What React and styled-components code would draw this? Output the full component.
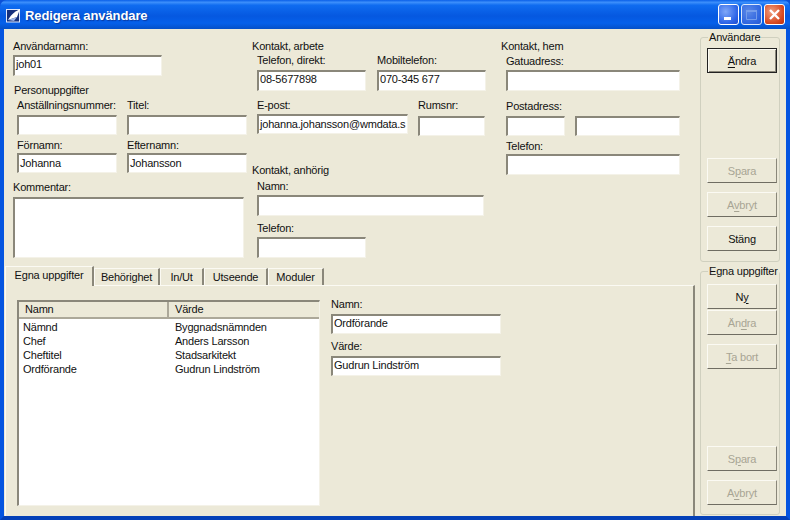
import React from "react";
import styled, { createGlobalStyle } from "styled-components";

const Global = createGlobalStyle`
  html, body {
    margin: 0;
    padding: 0;
    width: 790px;
    height: 520px;
    overflow: hidden;
    background: #0a50d8;
  }
  * {
    box-sizing: border-box;
  }
`;

const Window = styled.div`
  width: 790px;
  height: 520px;
  display: flex;
  flex-direction: column;
  font-family: "Liberation Sans", Arial, sans-serif;
  font-size: 11px;
  letter-spacing: -0.2px;
  color: #111;
`;

const TitleBar = styled.div`
  height: 29px;
  flex: none;
  display: flex;
  align-items: center;
  padding: 1px 5px 0 6px;
  border-radius: 7px 7px 0 0;
  background: linear-gradient(
    180deg,
    #0a5fe8 0%,
    #3c8ffb 8%,
    #0f6cf0 18%,
    #0558e0 55%,
    #0560ea 80%,
    #0450c8 100%
  );
`;

const TitleText = styled.div`
  margin-left: 4px;
  flex: 1;
  color: #fff;
  font-size: 13px;
  font-weight: 700;
  letter-spacing: -0.1px;
  text-shadow: 1px 1px 1px #0a3aa0;
`;

const Controls = styled.div`
  display: flex;
  gap: 2px;
  margin-top: -2px;
`;

const CtrlButton = styled.div`
  width: 21px;
  height: 21px;
  border: 1px solid #fff;
  border-radius: 3px;
  display: flex;
  align-items: center;
  justify-content: center;
  background: ${(p) =>
    p.$kind === "close"
      ? "radial-gradient(circle at 35% 35%, #f0a080, #d84a22 65%, #b8300e)"
      : p.$kind === "off"
      ? "radial-gradient(circle at 35% 35%, #6a90e8, #3a6ae0 65%, #2a58d0)"
      : "radial-gradient(circle at 35% 35%, #80a8f8, #2e66e8 65%, #1c4cd0)"};
  opacity: ${(p) => (p.$kind === "off" ? 0.85 : 1)};
`;

const Frame = styled.div`
  flex: 1;
  display: flex;
  min-height: 0;
  background: #ece9d8;
  border-left: 4px solid #0555e0;
  border-right: 4px solid #0555e0;
  border-bottom: 4px solid #0440b8;
`;

const Main = styled.div`
  width: 691px;
  display: flex;
  flex-direction: column;
`;

const TopForm = styled.div`
  height: 232px;
  display: grid;
  grid-template-columns: 239px 249px 1fr;
  padding: 11px 0 0 9px;
`;

const Column = styled.div`
  display: flex;
  flex-direction: column;
`;

const Heading = styled.div`
  height: 13px;
  line-height: 13px;
  white-space: nowrap;
  margin-top: ${(p) => p.$top || 0}px;
  margin-left: ${(p) => p.$left || 0}px;
`;

const Group = styled.div`
  display: flex;
  flex-direction: column;
  margin-left: ${(p) => p.$left ?? 5}px;
`;

const Row = styled.div`
  display: flex;
  gap: ${(p) => p.$gap || 10}px;
  align-items: flex-start;
  margin-top: ${(p) => p.$top || 0}px;
`;

const Field = styled.div`
  display: flex;
  flex-direction: column;
  width: ${(p) => p.$w}px;
  margin-top: ${(p) => p.$top || 0}px;
`;

const Label = styled.label`
  height: 13px;
  line-height: 13px;
  white-space: nowrap;
  margin-bottom: ${(p) => p.$gap}px;
`;

const Input = styled.div`
  height: ${(p) => p.$h || 21}px;
  background: #fff;
  border-top: 2px solid #8a877a;
  border-left: 2px solid #8a877a;
  border-right: 1px solid #f4f2e8;
  border-bottom: 1px solid #f4f2e8;
  padding: ${(p) => (p.$tight ? 1 : 2)}px 0 0 1px;
  line-height: 13px;
  white-space: nowrap;
  overflow: hidden;
`;

const TabArea = styled.div`
  flex: 1;
  display: flex;
  flex-direction: column;
  padding: 4px 0 0 1px;
`;

const TabStrip = styled.div`
  height: 20px;
  display: flex;
  align-items: flex-end;
`;

const Tab = styled.div`
  width: ${(p) => p.$w}px;
  height: ${(p) => (p.$active ? 20 : 17)}px;
  line-height: ${(p) => (p.$active ? 17 : 16)}px;
  text-align: center;
  white-space: nowrap;
  border-right: 2px solid #8a877a;
  border-left: 1px solid #fbfaf3;
  border-top: 1px solid #fbfaf3;
  margin-bottom: ${(p) => (p.$active ? -1 : 0)}px;
  position: relative;
  z-index: ${(p) => (p.$active ? 1 : 0)};
  background: #ece9d8;
`;

const Panel = styled.div`
  flex: 1;
  display: flex;
  gap: 11px;
  padding: 12px 0 10px 11px;
  border-top: 1px solid #fbfaf3;
  border-left: 1px solid #fbfaf3;
  border-right: 2px solid #8a877a;
`;

const List = styled.div`
  width: 303px;
  margin-top: 2px;
  display: flex;
  flex-direction: column;
  background: #fff;
  border-top: 2px solid #8a877a;
  border-left: 2px solid #8a877a;
  border-right: 1px solid #f4f2e8;
  border-bottom: 1px solid #f4f2e8;
`;

const ListHead = styled.div`
  height: 17px;
  flex: none;
  display: flex;
  background: #ece9d8;
  border-bottom: 2px solid #aca899;
  line-height: 15px;
`;

const HeadCell = styled.div`
  width: ${(p) => p.$w}px;
  padding-left: 6px;
  border-right: ${(p) => (p.$sep ? "2px solid #aca899" : "none")};
`;

const ListBody = styled.div`
  padding-top: 1px;
`;

const ListRow = styled.div`
  height: 14px;
  line-height: 14px;
  display: flex;
`;

const Cell = styled.div`
  width: ${(p) => p.$w}px;
  padding-left: ${(p) => p.$pad}px;
`;

const PanelForm = styled.div`
  display: flex;
  flex-direction: column;
`;

const Side = styled.div`
  flex: 1;
  display: flex;
  flex-direction: column;
  padding: 2px 0 0 5px;
`;

const Box = styled.fieldset`
  margin: 0;
  padding: 4px 0 0 6px;
  min-width: 0;
  width: 80px;
  height: ${(p) => p.$h}px;
  margin-top: ${(p) => p.$top || 0}px;
  border: 1px solid #d0d0bf;
  border-radius: 3px;
  display: flex;
  flex-direction: column;
  legend {
    padding: 0 1px;
    margin-left: 1px;
    line-height: 13px;
    white-space: nowrap;
  }
`;

const Stack = styled.div`
  display: flex;
  flex-direction: column;
  width: 70px;
`;

const Button = styled.div`
  width: 70px;
  height: 25px;
  flex: none;
  margin-top: ${(p) => p.$top || 0}px;
  display: flex;
  align-items: center;
  justify-content: center;
  background: #ece9d8;
  color: ${(p) => (p.$off ? "#a8a594" : "#111")};
  border: 1px solid;
  border-color: ${(p) =>
    p.$main ? "#222" : "#fbfaf3 #8a877a #6f6d62 #fbfaf3"};
  box-shadow: ${(p) =>
    p.$main ? "inset 1px 1px #fbfaf3, inset -1px -1px #8a877a" : "none"};
  u {
    text-underline-offset: 2px;
  }
`;

const TextField = ({ w, label, value, top, gap, h, tight }) => (
  <Field $w={w} $top={top}>
    <Label $gap={gap}>{label}</Label>
    <Input $h={h} $tight={tight}>{value}</Input>
  </Field>
);

const rows = [
  ["Nämnd", "Byggnadsnämnden"],
  ["Chef", "Anders Larsson"],
  ["Cheftitel", "Stadsarkitekt"],
  ["Ordförande", "Gudrun Lindström"],
];

const tabs = [
  ["Egna uppgifter", 89],
  ["Behörighet", 66],
  ["In/Ut", 44],
  ["Utseende", 64],
  ["Moduler", 56],
];

export default function App() {
  return (
    <Window>
      <Global />
      <TitleBar>
        <svg width="15" height="15" viewBox="0 0 15 15">
          <rect x="0.5" y="1.5" width="13" height="12.5" fill="#16307c" stroke="#dfe8fb" />
          <path d="M2 12 C5 7 8 4 14 1 L11 9 Z" fill="#fff" />
          <path d="M2 12 L11 9 L8 13 Z" fill="#9db4e8" />
        </svg>
        <TitleText>Redigera användare</TitleText>
        <Controls>
          <CtrlButton>
            <svg width="13" height="13" viewBox="0 0 13 13">
              <rect x="2" y="9" width="7" height="3" fill="#fff" />
            </svg>
          </CtrlButton>
          <CtrlButton $kind="off">
            <svg width="13" height="13" viewBox="0 0 13 13">
              <path d="M1.5 3.5h10v8h-10z" fill="none" stroke="#88a8ec" />
              <path d="M1 2h11v2H1z" fill="#88a8ec" />
            </svg>
          </CtrlButton>
          <CtrlButton $kind="close">
            <svg width="13" height="13" viewBox="0 0 13 13">
              <path d="M2 2l9 9M11 2l-9 9" stroke="#fff" strokeWidth="2.4" />
            </svg>
          </CtrlButton>
        </Controls>
      </TitleBar>
      <Frame>
        <Main>
          <TopForm>
            <Column>
              <TextField w={149} label="Användarnamn:" value="joh01" gap={2} tight />
              <Heading $top={8} $left={1}>Personuppgifter</Heading>
              <Group $left={4}>
                <Row $top={2}>
                  <TextField w={100} label="Anställningsnummer:" gap={3} h={20} />
                  <TextField w={120} label="Titel:" gap={3} h={20} />
                </Row>
                <Row $top={4}>
                  <TextField w={100} label="Förnamn:" value="Johanna" gap={1} h={20} />
                  <TextField w={120} label="Efternamn:" value="Johansson" gap={1} h={20} />
                </Row>
              </Group>
              <TextField w={231} top={8} label="Kommentar:" gap={3} h={61} />
            </Column>
            <Column>
              <Heading>Kontakt, arbete</Heading>
              <Group>
                <Row $gap={11} $top={1}>
                  <TextField w={109} label="Telefon, direkt:" gap={3} value="08-5677898" tight />
                  <TextField w={109} label="Mobiltelefon:" gap={3} value="070-345 677" tight />
                </Row>
                <Row $top={8}>
                  <TextField w={151} label="E-post:" value="johanna.johansson@wmdata.s" gap={2} h={20} />
                  <TextField w={67} label="Rumsnr:" gap={4} h={20} />
                </Row>
              </Group>
              <Heading $top={28}>Kontakt, anhörig</Heading>
              <Group>
                <TextField w={227} top={3} label="Namn:" gap={2} />
                <TextField w={109} top={6} label="Telefon:" gap={2} />
              </Group>
            </Column>
            <Column>
              <Heading>Kontakt, hem</Heading>
              <Group>
                <TextField w={174} top={2} label="Gatuadress:" gap={2} />
                <Row $top={9}>
                  <TextField w={59} label="Postadress:" gap={3} h={20} />
                  <Field $w={105}>
                    <Label $gap={3} />
                    <Input $h={20} />
                  </Field>
                </Row>
                <TextField w={174} top={4} label="Telefon:" gap={1} />
              </Group>
            </Column>
          </TopForm>
          <TabArea>
            <TabStrip>
              {tabs.map(([name, w], i) => (
                <Tab key={name} $w={w} $active={i === 0}>
                  {name}
                </Tab>
              ))}
            </TabStrip>
            <Panel>
              <List>
                <ListHead>
                  <HeadCell $w={150} $sep>Namn</HeadCell>
                  <HeadCell $w={150}>Värde</HeadCell>
                </ListHead>
                <ListBody>
                  {rows.map(([a, b]) => (
                    <ListRow key={a}>
                      <Cell $w={157} $pad={4}>{a}</Cell>
                      <Cell $w={145} $pad={0}>{b}</Cell>
                    </ListRow>
                  ))}
                </ListBody>
              </List>
              <PanelForm>
                <TextField w={170} label="Namn:" value="Ordförande" gap={3} h={20} tight />
                <TextField w={170} top={6} label="Värde:" value="Gudrun Lindström" gap={3} h={20} tight />
              </PanelForm>
            </Panel>
          </TabArea>
        </Main>
        <Side>
          <Box $h={231}>
            <legend>Användare</legend>
            <Stack>
              <Button $main><span><u>Ä</u>ndra</span></Button>
              <Button $off $top={85}><span>S<u>p</u>ara</span></Button>
              <Button $off $top={9}><span>A<u>v</u>bryt</span></Button>
              <Button $top={9}>Stäng</Button>
            </Stack>
          </Box>
          <Box $h={250} $top={3}>
            <legend>Egna uppgifter</legend>
            <Stack>
              <Button $top={2}><span>N<u>y</u></span></Button>
              <Button $off $top={1}><span>Än<u>d</u>ra</span></Button>
              <Button $off $top={9}><span><u>T</u>a bort</span></Button>
              <Button $off $top={77}><span>S<u>p</u>ara</span></Button>
              <Button $off $top={9}><span>A<u>v</u>bryt</span></Button>
            </Stack>
          </Box>
        </Side>
      </Frame>
    </Window>
  );
}
